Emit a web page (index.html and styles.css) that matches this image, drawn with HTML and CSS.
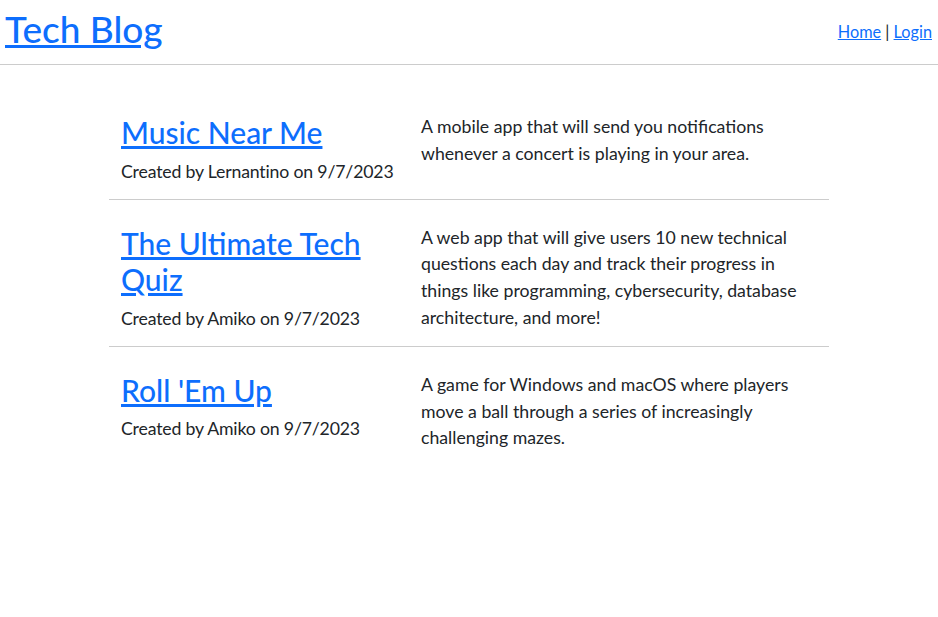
FILE: index.html
```html
<!DOCTYPE html>
<html lang="en">
<head>
<meta charset="utf-8">
<title>Tech Blog</title>
<link rel="stylesheet" href="styles.css">
</head>
<body>
<header class="site-header">
  <h1 class="site-title"><a href="#">Tech Blog</a></h1>
  <nav class="site-nav"><a href="#">Home</a> | <a href="#">Login</a></nav>
</header>
<main class="container">
  <article class="post">
    <div class="post-meta">
      <h2 class="post-title"><a href="#">Music Near Me</a></h2>
      <p class="post-by">Created by Lernantino on 9/7/2023</p>
    </div>
    <div class="post-body">
      <p>A mobile app that will send you notifications whenever a concert is playing in your area.</p>
    </div>
  </article>
  <article class="post">
    <div class="post-meta">
      <h2 class="post-title"><a href="#">The Ultimate Tech Quiz</a></h2>
      <p class="post-by">Created by Amiko on 9/7/2023</p>
    </div>
    <div class="post-body">
      <p>A web app that will give users 10 new technical questions each day and track their progress in things like programming, cybersecurity, database architecture, and more!</p>
    </div>
  </article>
  <article class="post last">
    <div class="post-meta">
      <h2 class="post-title"><a href="#">Roll 'Em Up</a></h2>
      <p class="post-by">Created by Amiko on 9/7/2023</p>
    </div>
    <div class="post-body">
      <p>A game for Windows and macOS where players move a ball through a series of increasingly challenging mazes.</p>
    </div>
  </article>
</main>
</body>
</html>
```
FILE: styles.css
```css
* { box-sizing: border-box; }
body {
  margin: 0;
  font-family: Lato, "Open Sans", sans-serif;
  font-size: 16px;
  line-height: 1.5;
  color: #212529;
  background: #fff;
}
a { color: #0d6efd; text-decoration: underline; }

.site-header {
  display: flex;
  justify-content: space-between;
  align-items: center;
  height: 65px;
  padding: 0 6px 0 5px;
  border-bottom: 1px solid #cccccc;
}
.site-title {
  margin: 0;
  font-size: 37px;
  font-weight: 500;
  line-height: 1.2;
  position: relative;
  top: -3px;
}
.site-nav {
  font-size: 16.3px;
}

.container {
  width: 720px;
  margin: 24.5px auto 0;
}
.post {
  display: grid;
  grid-template-columns: 300px 420px;
  padding-top: 24.5px;
  border-bottom: 1px solid #cccccc;
}
.post.last { border-bottom: none; }
.post-meta, .post-body { padding: 0 12px; }
.post-title {
  margin: 0 0 8px;
  font-size: 30px;
  font-weight: 500;
  line-height: 36.5px;
}
.post p {
  margin: 0 0 14px;
  font-size: 17.7px;
  line-height: 26.67px;
}
.post p.post-by {
  letter-spacing: -0.18px;
  white-space: nowrap;
}
```
